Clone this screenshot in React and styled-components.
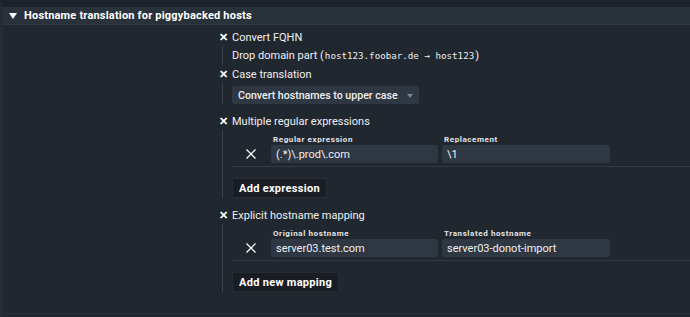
import React from "react";
import styled, { createGlobalStyle } from "styled-components";

const Global = createGlobalStyle`
  html, body { margin: 0; padding: 0; background: #21272f; }
  body { font-family: Roboto, "Noto Sans", sans-serif; color: #e6e8eb; }
  * { box-sizing: border-box; }
`;

const Page = styled.div`
  width: 690px;
  height: 317px;
  background: #21272f;
  border-top: 7px solid #1d2129;
  border-left: 3px solid #262c35;
  display: flex;
  flex-direction: column;
  overflow: hidden;
`;

const Header = styled.div`
  height: 18px;
  flex: none;
  display: flex;
  align-items: center;
  gap: 7px;
  padding-left: 6px;
  background: #29313b;
  border-bottom: 1px solid #2e3641;
  font-weight: 700;
  font-size: 11px;
  color: #ffffff;
  letter-spacing: 0.2px;
`;

const Triangle = styled.span`
  width: 0;
  height: 0;
  border-left: 4px solid transparent;
  border-right: 4px solid transparent;
  border-top: 6px solid #ffffff;
  margin-top: 1px;
`;

const Body = styled.div`
  flex: 1;
  padding: 3px 0 0 215px;
  border-bottom: 1px solid #2a313a;
  margin-bottom: 3px;
`;

const Item = styled.div`
  display: flex;
  flex-direction: column;
`;

const ItemHead = styled.div`
  height: 18px;
  display: flex;
  align-items: center;
  font-size: 11px;
  color: #eef0f2;
`;

const Check = styled.span`
  width: 14px;
  font-size: 11px;
  font-weight: 900;
  color: #ffffff;
  line-height: 1;
  padding-left: 1px;
`;

const Nested = styled.div`
  margin-left: 4px;
  border-left: 1px solid #3a424d;
  padding-left: 9px;
  margin-bottom: ${(p) => p.$mb || 0}px;
`;

const Text = styled.div`
  font-size: 11px;
  color: #eef0f2;
  height: 19px;
  display: flex;
  align-items: center;
`;

const Mono = styled.span`
  font-family: "DejaVu Sans Mono", "Liberation Mono", monospace;
  font-size: 9.2px;
  margin: 0 1px;
`;

const Select = styled.div`
  width: 187px;
  height: 18px;
  background: #2f3742;
  border-radius: 2px;
  display: flex;
  align-items: center;
  justify-content: space-between;
  padding: 0 6px 0 6px;
  font-size: 10.6px;
  font-weight: 500;
  color: #eef0f2;
  margin: 3px 0 0 0;
`;

const SelectArrow = styled.span`
  width: 0;
  height: 0;
  border-left: 3px solid transparent;
  border-right: 3px solid transparent;
  border-top: 4px solid #7d8590;
  margin-top: 2px;
`;

const ListRow = styled.div`
  display: flex;
  align-items: flex-end;
  padding: 5px 0 3px 0;
  border-bottom: 1px solid #323a45;
  margin-right: -10px;
`;

const Delete = styled.span`
  width: 39px;
  height: 18px;
  display: flex;
  align-items: center;
  justify-content: center;
  padding-bottom: 1px;
  padding-right: 1px;
`;

const Field = styled.div`
  display: flex;
  flex-direction: column;
  margin-right: 4px;
`;

const Label = styled.div`
  font-size: 8px;
  font-weight: 700;
  letter-spacing: 0.6px;
  color: #e2e5e8;
  height: 10px;
  line-height: 10px;
  padding-left: 2px;
`;

const Input = styled.div`
  width: ${(p) => p.$w}px;
  height: 18px;
  background: #2f3742;
  border-radius: 2px;
  display: flex;
  align-items: center;
  padding-left: 5px;
  font-size: 11px;
  color: #eef0f2;
`;

const Button = styled.div`
  align-self: flex-start;
  display: inline-flex;
  align-items: center;
  height: 20px;
  padding: 0 6px;
  background: #1a1e24;
  border: 1px solid #262c34;
  border-radius: 2px;
  font-size: 11px;
  font-weight: 700;
  color: #ffffff;
  letter-spacing: 0.3px;
  margin: 11px 0 0 0;
`;

const ListBox = styled.div`
  display: flex;
  flex-direction: column;
`;

const XIcon = () => (
  <svg width="12" height="12" viewBox="0 0 12 12">
    <path d="M1.5 1.5 L10.5 10.5 M10.5 1.5 L1.5 10.5" stroke="#ffffff" strokeWidth="1.2" />
  </svg>
);

const ListTable = ({ cols, values, button }) => (
  <ListBox>
    <ListRow>
      <Delete>
        <XIcon />
      </Delete>
      <Field>
        <Label>{cols[0]}</Label>
        <Input $w={167}>{values[0]}</Input>
      </Field>
      <Field>
        <Label>{cols[1]}</Label>
        <Input $w={168}>{values[1]}</Input>
      </Field>
    </ListRow>
    <Button>{button}</Button>
  </ListBox>
);

export default function App() {
  return (
    <>
      <Global />
      <Page>
        <Header>
          <Triangle />
          Hostname translation for piggybacked hosts
        </Header>
        <Body>
          <Item>
            <ItemHead>
              <Check>✕</Check>Convert FQHN
            </ItemHead>
            <Nested>
              <Text>
                Drop domain part (<Mono>host123.foobar.de → host123</Mono>)
              </Text>
            </Nested>
          </Item>
          <Item>
            <ItemHead>
              <Check>✕</Check>Case translation
            </ItemHead>
            <Nested $mb={8}>
              <Select>
                Convert hostnames to upper case
                <SelectArrow />
              </Select>
            </Nested>
          </Item>
          <Item>
            <ItemHead>
              <Check>✕</Check>Multiple regular expressions
            </ItemHead>
            <Nested $mb={8}>
              <ListTable
                cols={["Regular expression", "Replacement"]}
                values={["(.*)\\.prod\\.com", "\\1"]}
                button="Add expression"
              />
            </Nested>
          </Item>
          <Item>
            <ItemHead>
              <Check>✕</Check>Explicit hostname mapping
            </ItemHead>
            <Nested $mb={4}>
              <ListTable
                cols={["Original hostname", "Translated hostname"]}
                values={["server03.test.com", "server03-donot-import"]}
                button="Add new mapping"
              />
            </Nested>
          </Item>
        </Body>
      </Page>
    </>
  );
}
